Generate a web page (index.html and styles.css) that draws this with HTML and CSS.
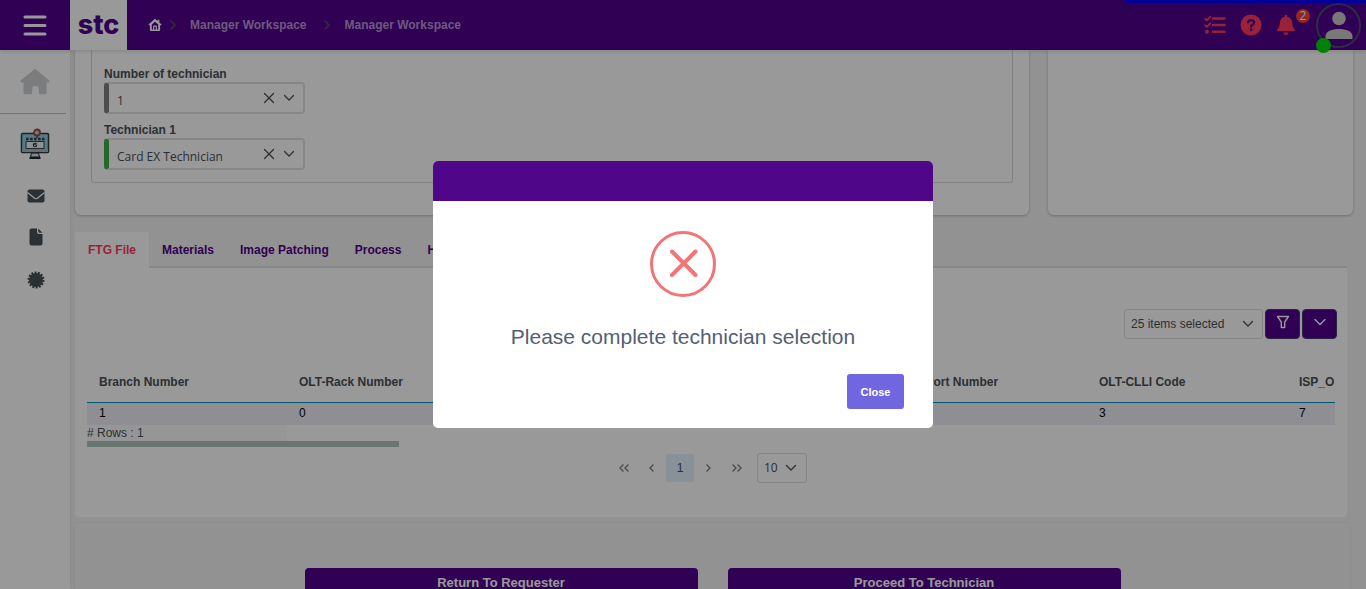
FILE: index.html
```html
<!DOCTYPE html>
<html lang="en">
<head>
<meta charset="utf-8">
<title>Manager Workspace</title>
<link rel="stylesheet" href="styles.css">
</head>
<body>
<header class="topbar">
  <button class="icon-btn menu-btn" aria-label="Menu">
    <svg width="24" height="22" viewBox="0 0 24 22" stroke="#fff" stroke-width="3" stroke-linecap="round"><path d="M2 3h20M2 11.500h20M2 20h20"/></svg>
  </button>
  <a class="logo" href="#">stc</a>
  <nav class="crumbs" aria-label="Breadcrumb">
    <a href="#" aria-label="Home"><svg width="14" height="14" viewBox="0 0 14 14"><path fill="#fff" fill-rule="evenodd" d="M7 .8 9.600 3V1.800h1.700v2.700L13.600 6.600l-.8.9-.7-.6V12q0 1-1 1H2.900q-1 0-1-1V6.900l-.7.600-.8-.9zM7 3.800 3.800 6.600v4.900h1.300V8.200q0-.7.7-.7h2.400q.7 0 .7.7v3.300h1.300V6.600zM6.200 8.800v2.700h1.600V8.800z"/></svg></a>
    <svg class="sep" width="8" height="12" viewBox="0 0 8 12"><path d="m1.500 1.500 4.500 4.500-4.500 4.500"/></svg>
    <a class="crumb" href="#">Manager Workspace</a>
    <svg class="sep" width="8" height="12" viewBox="0 0 8 12"><path d="m1.500 1.500 4.500 4.500-4.500 4.500"/></svg>
    <a class="crumb" href="#">Manager Workspace</a>
  </nav>
  <div class="tools">
    <button class="icon-btn" aria-label="Tasks"><svg width="22" height="20" viewBox="0 0 22 20" fill="none" stroke="#ff375e" stroke-linecap="round" stroke-width="2.500"><path d="M9 3.500h11.500M9 10h11.500M9 16.800h11.500"/><path stroke-width="1.900" stroke-linejoin="round" d="m1.300 3.800 1.600 1.600L6.300 1.900M1.300 10.300l1.600 1.600L6.300 8.400"/><circle cx="3" cy="16.800" r="2" fill="#ff375e" stroke="none"/></svg></button>
    <button class="icon-btn" aria-label="Help"><svg width="22" height="22" viewBox="0 0 22 22"><circle cx="11" cy="11" r="10.500" fill="#ff375e"/><path fill="none" stroke="#4f008c" stroke-width="2.300" stroke-linecap="round" d="M8 8.300q.3-2 2.600-2h1.200q2.300.2 2.300 2.200 0 1.400-1.500 2.200-1.500.7-1.500 1.900"/><circle cx="11.100" cy="15.700" r="1.400" fill="#4f008c"/></svg></button>
    <button class="icon-btn bell" aria-label="Notifications"><svg width="20" height="22" viewBox="0 0 20 22" fill="#ff375e"><path d="M10 .8q1.200 0 1.200 1.200v.8q4.600.9 4.900 5.700.1 4.600 2.500 6.900.8 1-.2 1.800H1.600q-1-.8-.2-1.800 2.400-2.300 2.500-6.900.3-4.800 4.900-5.700V2Q8.800.8 10 .8zM7.300 18.600h5.400q-.5 2.400-2.700 2.400t-2.700-2.400z"/></svg><span class="count">2</span></button>
    <button class="icon-btn avatar" aria-label="Account"><svg width="28" height="28" viewBox="0 0 28 28" fill="#c8c8c8"><circle cx="14" cy="7.500" r="6.800"/><path d="M.5 28v-3C.5 20.500 7 18 14 18s13.500 2.500 13.500 7v3z"/></svg><span class="online"></span></button>
  </div>
  <div class="progress"></div>
</header>

<div class="shell">
  <aside class="side">
    <a class="home" href="#" aria-label="Home"><svg width="30" height="27" viewBox="0 0 30 27"><path fill="#cdcfd2" d="M15 .8 29.300 12.500q.7 1.900-1.300 1.900h-1.500v10q0 1.900-1.900 1.900h-4.500q-1.300 0-1.300-1.500v-5q0-1.600-1.600-1.600h-3.400q-1.600 0-1.600 1.600v5q0 1.500-1.300 1.500H5.400q-1.900 0-1.900-1.900v-10H2Q0 14.400.7 12.500z"/></svg></a>
    <nav class="side-nav" aria-label="Sections">
      <a class="workspace" href="#" aria-label="Workspace"><svg width="30" height="32" viewBox="0 0 30 32"><path fill="#e0e3e4" stroke="#1d2730" d="M11.500 25h7l1 4h-9z"/><path fill="none" stroke="#1d2730" stroke-width="2" d="M9.500 30h11"/><rect x="1.500" y="5.500" width="27" height="19" rx="1" fill="#8fd0da" stroke="#2b3942" stroke-width="1.500"/><path fill="#aeb6b9" d="M2 21h26v3H2z"/><path stroke="#3b3f4c" stroke-width="2.600" stroke-dasharray="2.700 1.300" d="M6 11h18.500"/><rect x="6" y="13.500" width="18" height="7" fill="#eef3f4" stroke="#35424b"/><circle cx="15" cy="17" r="2.300" fill="#34404a"/><path stroke="#fff" d="m14 17 1 .8 1.700-1.800"/><circle cx="17" cy="4.500" r="3" fill="#b9c6ca" stroke="#a5454b" stroke-width="1.800"/><path stroke="#a5454b" stroke-width="2" d="M17 7.500V10"/></svg></a>
      <a href="#" aria-label="Mail"><svg width="18" height="14" viewBox="0 0 18 14"><rect x=".5" y=".5" width="17" height="13" rx="2" fill="#495057"/><path fill="none" stroke="#fff" stroke-width="1.300" d="M.5 3.500 7.300 9q1.700 1.300 3.400 0l6.800-5.500"/></svg></a>
      <a href="#" aria-label="Documents"><svg width="14" height="18" viewBox="0 0 14 18" fill="#495057"><path d="M2.500.5H8V4q0 2 2 2h3.500v9.500q0 2-2 2h-9q-2 0-2-2v-13q0-2 2-2zM9.300.6l4.100 4.100h-3q-1.100 0-1.100-1.100z"/></svg></a>
      <a href="#" aria-label="Settings"><svg width="18" height="18" viewBox="0 0 18 18"><circle cx="9" cy="9" r="7" fill="#495057"/><circle cx="9" cy="9" r="7.300" fill="none" stroke="#495057" stroke-width="2.400" stroke-dasharray="1.900 1.376"/></svg></a>
    </nav>
  </aside>

  <main class="main">
    <div class="cards">
      <section class="card card-form">
        <div class="fields">
          <label for="count">Number of technician</label>
          <div class="picker">
            <select id="count"><option>1</option></select>
            <button aria-label="Clear number"><svg width="12" height="12" viewBox="0 0 12 12"><path d="m1.500 1.500 9 9m0-9-9 9"/></svg></button>
            <svg width="12" height="8" viewBox="0 0 12 8"><path d="m1.500 1.500 4.500 4.500 4.500-4.500"/></svg>
          </div>
          <label for="tech">Technician 1</label>
          <div class="picker valid">
            <select id="tech"><option>Card EX Technician</option></select>
            <button aria-label="Clear technician"><svg width="12" height="12" viewBox="0 0 12 12"><path d="m1.500 1.500 9 9m0-9-9 9"/></svg></button>
            <svg width="12" height="8" viewBox="0 0 12 8"><path d="m1.500 1.500 4.500 4.500 4.500-4.500"/></svg>
          </div>
        </div>
      </section>
      <section class="card card-side"></section>
    </div>

    <section class="tabview">
      <div class="tabs" role="tablist">
        <button role="tab" class="tab active" aria-selected="true">FTG File</button>
        <button role="tab" class="tab">Materials</button>
        <button role="tab" class="tab">Image Patching</button>
        <button role="tab" class="tab">Process</button>
        <button role="tab" class="tab">History</button>
      </div>
      <div class="panel">
        <div class="toolbar">
          <div class="drop columns">
            <select aria-label="Columns"><option>25 items selected</option></select>
            <svg width="12" height="8" viewBox="0 0 12 8"><path d="m1.500 1.500 4.500 4.500 4.500-4.500"/></svg>
          </div>
          <button class="tool" aria-label="Filter"><svg width="14" height="14" viewBox="0 0 14 14"><path d="M1.500 1.500h11L8.700 7v5.500H5.300V7z"/></svg></button>
          <button class="tool" aria-label="More"><svg width="14" height="14" viewBox="0 0 14 14"><path d="m2 4.500 5 5 5-5"/></svg></button>
        </div>
        <div class="table-wrap">
          <table>
            <thead><tr><th>Branch Number</th><th>OLT-Rack Number</th><th>OLT-Shelf Number</th><th>OLT-Slot Number</th><th>OLT-Port Number</th><th>OLT-CLLI Code</th><th>ISP_O</th></tr></thead>
            <tbody><tr><td>1</td><td>0</td><td>0</td><td>1</td><td>1</td><td>3</td><td>7</td></tr></tbody>
            <tfoot><tr><td># Rows : 1</td></tr></tfoot>
          </table>
          <div class="scroll-thumb"></div>
        </div>
        <div class="pager">
          <button aria-label="First page"><svg width="12" height="10" viewBox="0 0 12 10"><path d="M5.500 1.500 2 5l3.500 3.500M10.500 1.500 7 5l3.500 3.500"/></svg></button>
          <button aria-label="Previous page"><svg width="12" height="10" viewBox="0 0 12 10"><path d="M7.500 1.500 4 5l3.500 3.500"/></svg></button>
          <button class="current">1</button>
          <button aria-label="Next page"><svg width="12" height="10" viewBox="0 0 12 10"><path d="M4.500 1.500 8 5 4.500 8.500"/></svg></button>
          <button aria-label="Last page"><svg width="12" height="10" viewBox="0 0 12 10"><path d="M2.500 1.500 6 5 2.500 8.500M7.500 1.500 11 5 7.500 8.500"/></svg></button>
          <div class="drop size">
            <select aria-label="Rows per page"><option>10</option></select>
            <svg width="12" height="8" viewBox="0 0 12 8"><path d="m1.500 1.500 4.500 4.500 4.500-4.500"/></svg>
          </div>
        </div>
      </div>
    </section>

    <section class="actions">
      <div class="action-row">
        <button>Return To Requester</button>
        <button>Proceed To Technician</button>
      </div>
    </section>
  </main>
</div>

<div class="mask">
  <div class="dialog" role="alertdialog" aria-labelledby="msg">
    <div class="dialog-head"></div>
    <div class="dialog-body">
      <svg width="66" height="66" viewBox="0 0 66 66" fill="none" stroke="#f27474"><circle cx="33" cy="33" r="31.500" stroke-width="3"/><path stroke-width="4" stroke-linecap="round" d="m22 20.500 23.500 23.500M45.500 20.500 22 44"/></svg>
      <p id="msg">Please complete technician selection</p>
      <button class="close">Close</button>
    </div>
  </div>
</div>
</body>
</html>
```

FILE: styles.css
```css
* { box-sizing: border-box; }
body {
  margin: 0;
  height: 100vh;
  overflow: hidden;
  display: flex;
  flex-direction: column;
  background: #f4f4f4;
  color: #495057;
  font: 12px/16px "Liberation Sans", Arial, sans-serif;
}
button, select { font: inherit; color: inherit; border: 0; background: none; padding: 0; margin: 0; }
select { appearance: none; min-width: 0; outline: 0; }
a { text-decoration: none; color: inherit; }
svg { display: block; flex: none; }

/* Header */
.topbar {
  position: relative;
  z-index: 1;
  flex: none;
  display: flex;
  align-items: center;
  height: 50px;
  background: #4f008c;
  box-shadow: 0 1px 4px rgba(0, 0, 0, .15);
}
.icon-btn { display: flex; align-items: center; justify-content: center; }
.menu-btn { width: 70px; height: 50px; }
.logo {
  width: 57px;
  height: 50px;
  background: #fff;
  color: #4f008c;
  font: 800 27px/50px Inter, "Open Sans", sans-serif;
  text-align: center;
}
.crumbs { display: flex; align-items: center; margin-left: 21px; }
.crumb { color: #b896cf; font-weight: 700; }
.sep { fill: none; stroke: #50505c; stroke-width: 1.500; margin: 0 13px 0 7px; }
.crumb + .sep { margin: 0 14px 0 16px; }
.tools { display: flex; align-items: center; margin-left: auto; margin-right: 5px; }
.tools .icon-btn + .icon-btn { margin-left: 14px; }
.tools .bell { position: relative; }
.count {
  position: absolute;
  top: -5px;
  right: -14px;
  width: 14px;
  height: 14px;
  border-radius: 50%;
  background: #f04438;
  color: #fff;
  font: 12px/14px "Open Sans", sans-serif;
  text-align: center;
}
.tools .avatar.avatar {
  position: relative;
  width: 45px;
  height: 45px;
  margin-left: 20px;
  border: 2px solid #4d4a6b;
  border-radius: 50%;
}
.online {
  position: absolute;
  left: -2px;
  bottom: -7px;
  width: 15px;
  height: 15px;
  border-radius: 50%;
  background: #00d60a;
}
.progress {
  position: absolute;
  top: 0;
  right: 0;
  width: 240px;
  height: 3px;
  background: #00f;
  box-shadow: 0 0 6px rgba(0, 0, 255, .5);
}

/* Sidebar */
.shell { flex: 1; min-height: 0; display: flex; }
.side { flex: none; width: 70px; background: #fff; box-shadow: 0 0 5px rgba(0, 0, 0, .1); }
.home { display: flex; justify-content: center; margin-right: 4px; padding: 18px 0 18px 4px; border-bottom: 1px solid #c4c4c4; }
.side-nav { display: flex; flex-direction: column; align-items: center; gap: 25px; padding: 14px 0 0 2px; }
.workspace { margin: 0 2px 4px 0; }

/* Upper cards */
.main { flex: 1; min-width: 0; padding-left: 5px; }
.cards { display: flex; gap: 19px; height: 165px; margin-right: 13px; }
.card { background: #fff; border-radius: 0 0 6px 6px; box-shadow: 0 1px 3px rgba(0, 0, 0, .25); }
.card-form { flex: 922; padding: 0 16px 32px; }
.card-side { flex: 305; }
.fields { height: 133px; padding: 16px 12px 0; border: 1px solid #d5d9dd; border-top: 0; border-radius: 0 0 3px 3px; }
.fields label { display: block; font-weight: 700; }
.picker {
  display: flex;
  align-items: center;
  gap: 8px;
  width: 201px;
  height: 32px;
  margin: 0 0 8px;
  padding-right: 8px;
  border: 2px solid #e2e2e2;
  border-left: 5px solid #808080;
  border-radius: 4px;
}
.picker.valid { border-left-color: #3fae49; }
.picker select { flex: 1; height: 28px; padding: 5px 0 0 8px; font-family: "Open Sans", sans-serif; }
.picker svg, .drop svg { fill: none; stroke: #495057; stroke-width: 1.300; stroke-linecap: round; pointer-events: none; }

/* Tabs and table */
.tabview { margin: 17px 19px 6px 0; }
.tabs { display: flex; height: 36px; border-bottom: 2px solid #dee2e6; }
.tab { height: 36px; padding: 0 13px; color: #4f008c; font-weight: 700; }
.tab.active { background: #fff; color: #ff375e; border-radius: 3px 3px 0 0; }
.panel { display: flow-root; padding: 0 12px; height: 249px; background: #fff; border-radius: 0 0 4px 4px; }
.toolbar { display: flex; justify-content: flex-end; gap: 2px; margin: 41px -2px 0 0; }
.drop { display: flex; align-items: center; height: 30px; border: 1px solid #dedede; border-radius: 3px; padding: 0 9px 0 6px; }
.drop select { flex: 1; height: 28px; }
.columns { width: 139px; padding-right: 8px; }
.tool {
  display: flex;
  justify-content: center;
  width: 35px;
  height: 30px;
  padding-top: 5px;
  background: #4f008c;
  border: 1px solid #40406c;
  border-radius: 4px;
}
.tool svg { fill: none; stroke: #fff; stroke-width: 1.400; stroke-linejoin: round; stroke-linecap: round; }
.table-wrap { overflow: hidden; margin-top: 22px; }
table { width: 1400px; table-layout: fixed; border-collapse: separate; border-spacing: 0; }
th, td { padding: 0 0 0 12px; text-align: left; }
th { height: 42px; border-bottom: 1px solid #0793b8; }
tbody td { height: 22px; background: #eeeff5; color: #000; padding-bottom: 3px; }
tfoot td { height: 16px; padding: 0; background: #fbfbfb; }
.scroll-thumb { width: 25%; height: 6px; background: #adc5be; }
.pager { display: flex; justify-content: center; align-items: center; margin-top: 6px; padding-right: 5px; }
.pager button { display: flex; align-items: center; justify-content: center; width: 28px; height: 28px; }
.pager button svg { fill: none; stroke: #7c8088; stroke-width: 1.400; }
.pager .current { background: #e3f2fd; }
.size { width: 50px; margin-left: 7px; }
.pager .drop { font-family: "Open Sans", sans-serif; }

/* Bottom actions */
.actions { height: 120px; margin-right: 16px; padding-top: 45px; border-radius: 4px; background: #f4f4f4; box-shadow: 0 0 3px rgba(0, 0, 0, .1); }
.action-row { display: flex; gap: 30px; width: 64%; margin: 0 auto; }
.action-row button { flex: 1; height: 30px; border-radius: 4px; background: #4f008c; color: #fff; font-size: 13px; font-weight: 700; }

/* Alert */
.mask { position: fixed; inset: 0; z-index: 2; display: flex; align-items: center; justify-content: center; background: rgba(0, 0, 0, .4); }
.dialog { width: 500px; background: #fff; border-radius: 5px; overflow: hidden; }
.dialog-head { height: 40px; background: #4f0688; }
.dialog-body { display: flex; flex-direction: column; align-items: center; padding: 30px 29px 19px; }
.dialog-body p { margin: 27px 0 24px; color: #545f73; font-size: 21px; line-height: 26px; }
.close { align-self: flex-end; width: 57px; height: 35px; border-radius: 3px; background: #7066e0; color: #fff; font-size: 11px; font-weight: 700; }
```
